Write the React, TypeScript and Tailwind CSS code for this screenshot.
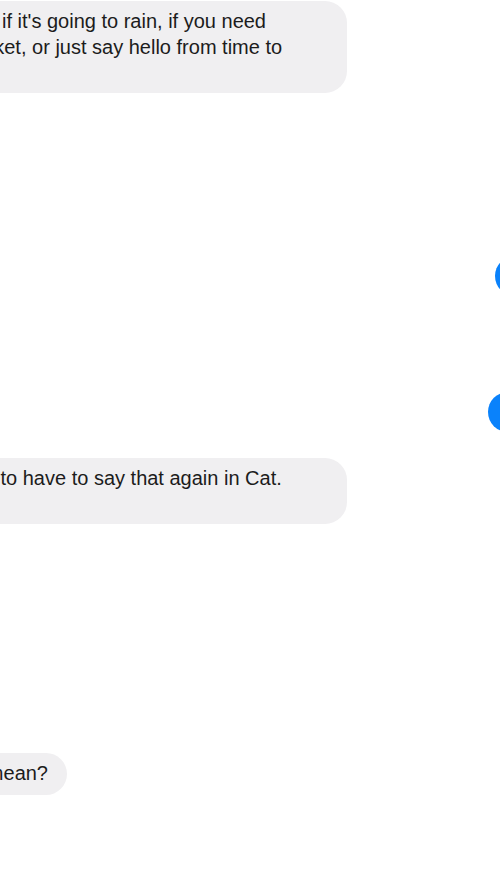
export default function App() {
  return (
    <div className="w-full h-[896px] overflow-hidden bg-white">
      <div className="flex flex-col items-start pt-px text-[20px] leading-[26px] text-[#1c1c1c] font-['Liberation_Sans',Arial,sans-serif]">
        <div className="ml-[-62px] w-[409px] rounded-[22px] bg-[#f0eff1] pl-[14px] py-[7px] whitespace-nowrap">
          them if it's going to rain, if you need
          <br />
          a jacket, or just say hello from time to
          <br />
          time.
        </div>

        <div className="mt-[163px] ml-[495px] w-[220px] rounded-[20px] bg-[#0a82fb] text-white px-[14px] py-[7px] whitespace-nowrap">
          Sure thing!
        </div>

        <div className="mt-[96px] ml-[488px] w-[220px] rounded-[20px] bg-[#0a82fb] text-white px-[14px] py-[7px] whitespace-nowrap">
          Meow meow.
        </div>

        <div className="mt-[26px] ml-[-68px] w-[415px] rounded-[22px] bg-[#f0eff1] pl-[14px] py-[7px] whitespace-nowrap">
          going to have to say that again in Cat.
          <br />
          Mew.
        </div>

        <div className="mt-[229px] ml-[-145px] w-[212px] rounded-[22px] bg-[#f0eff1] pl-[14px] pt-[7px] pb-[9px] whitespace-nowrap">
          What do you mean?
        </div>
      </div>
    </div>
  );
}
